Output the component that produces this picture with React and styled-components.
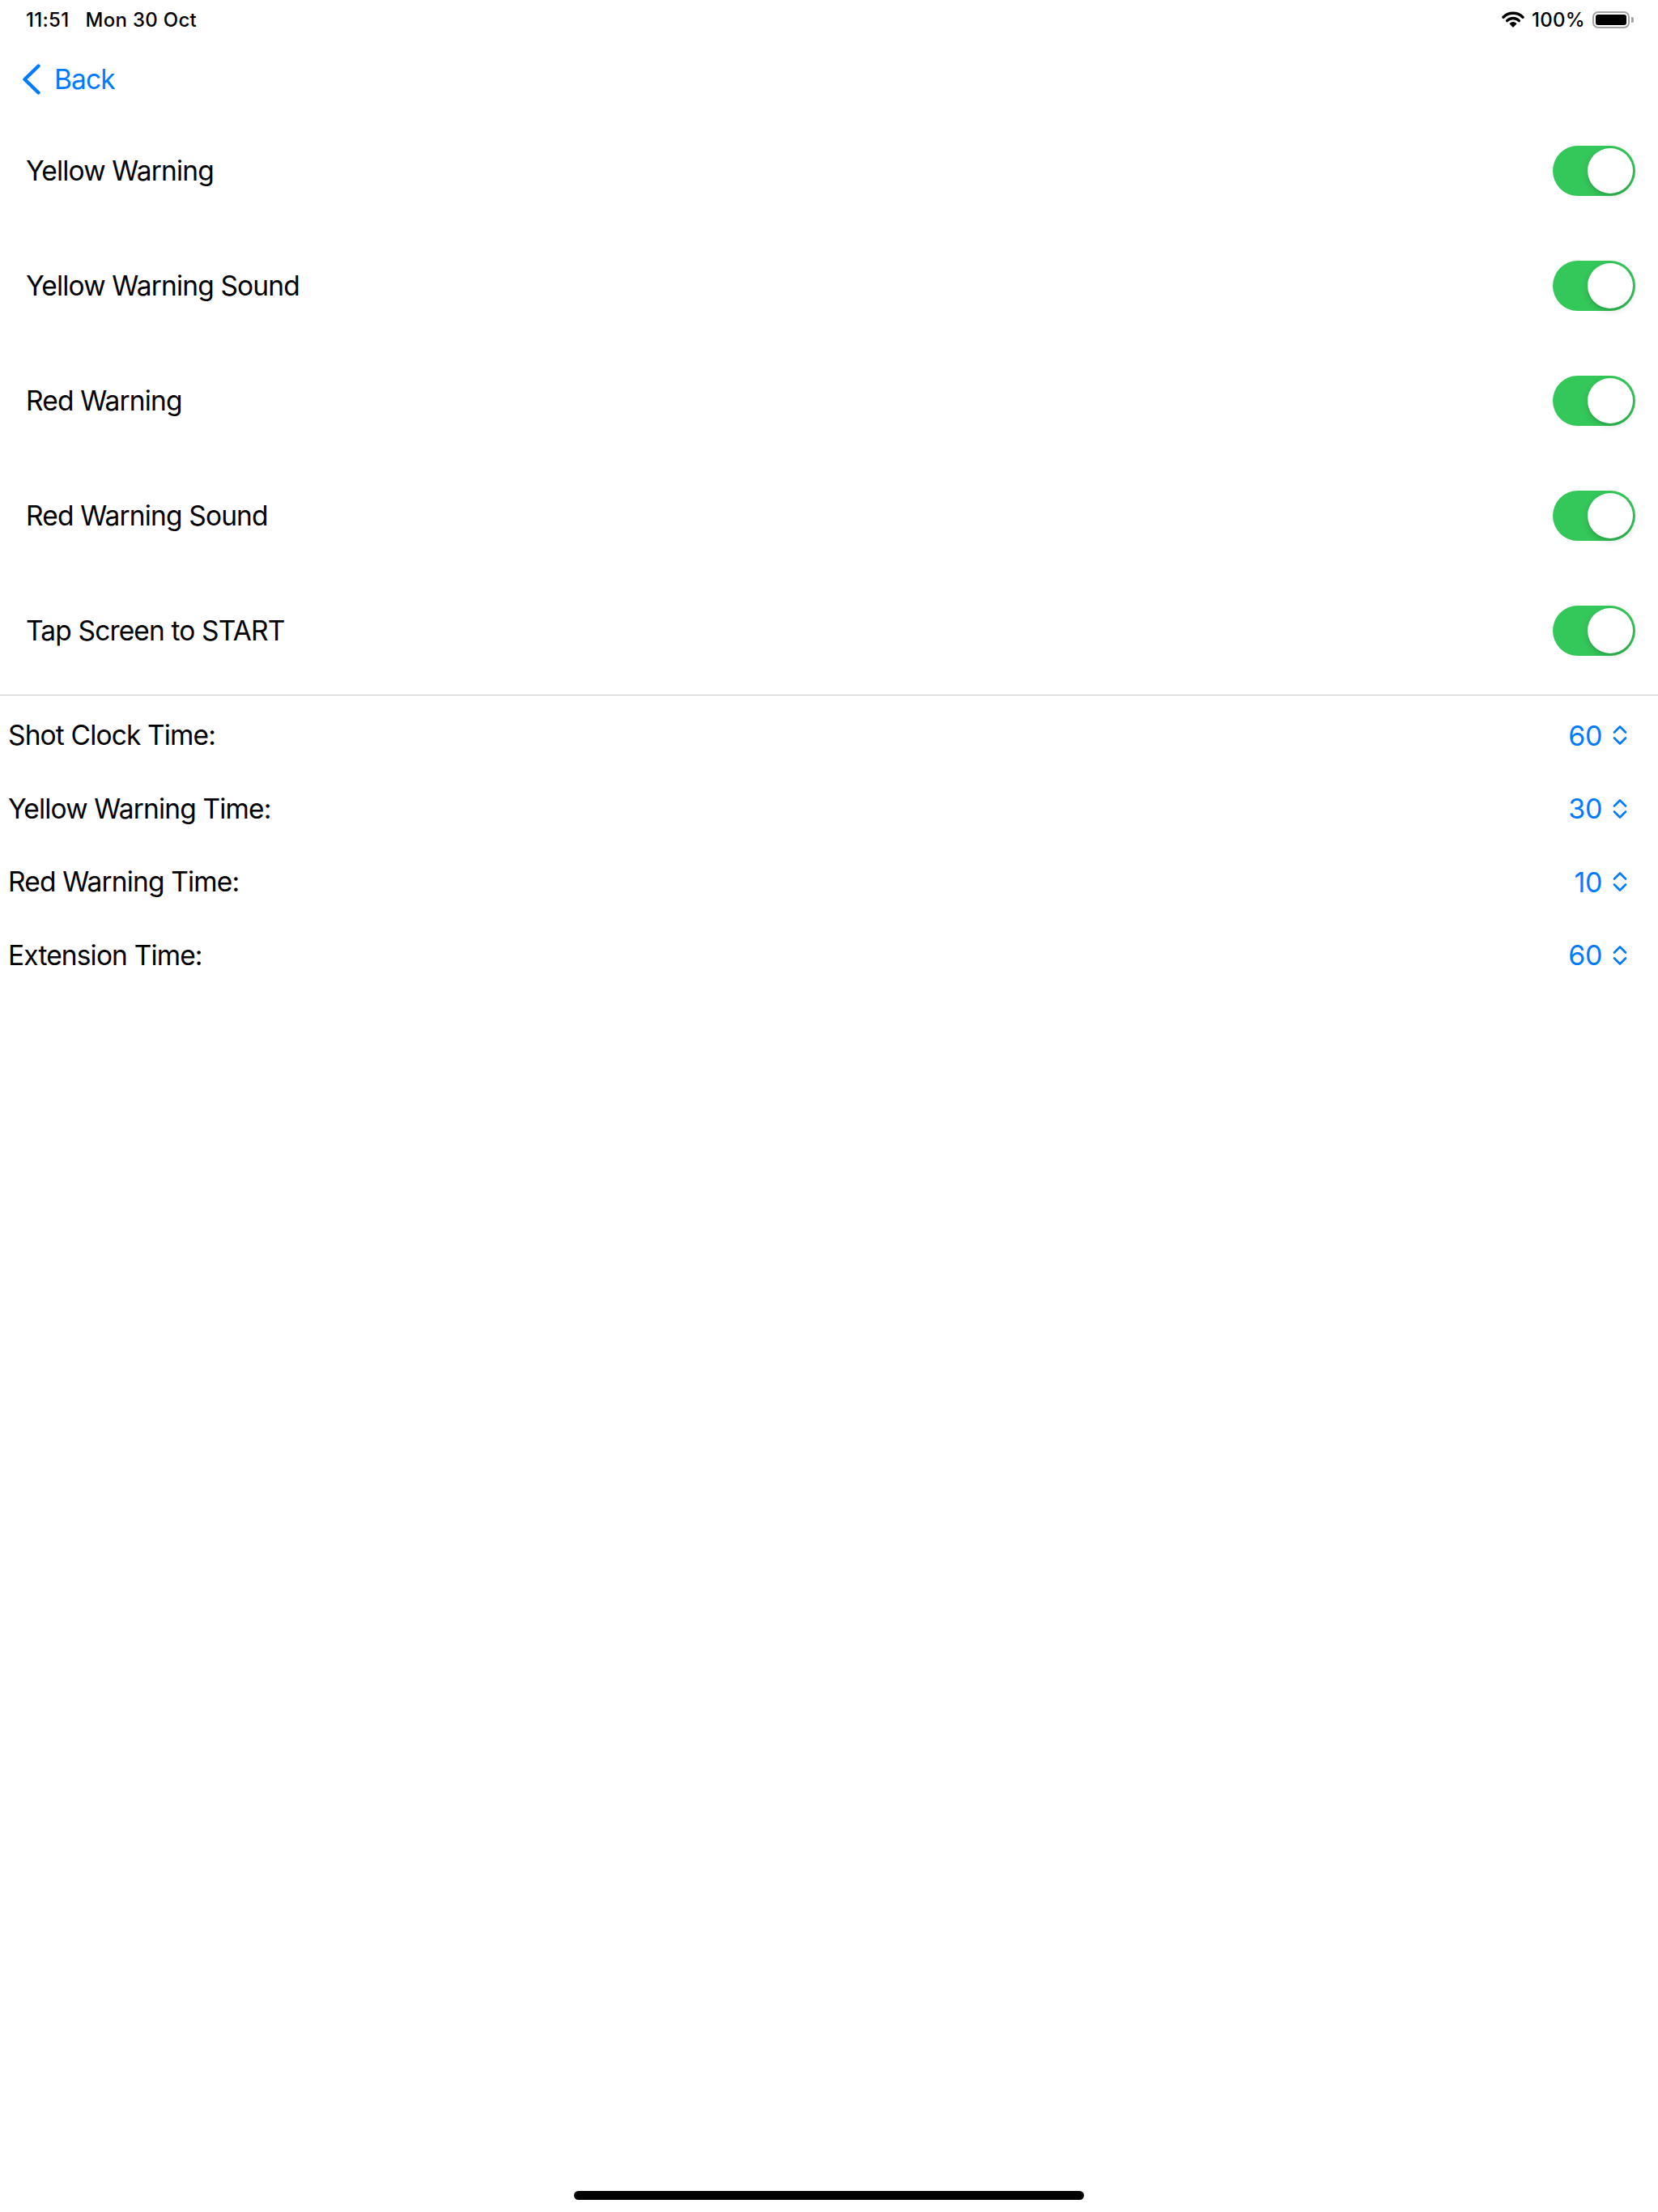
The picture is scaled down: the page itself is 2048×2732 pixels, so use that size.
import React, { useState } from 'react';
import styled, { createGlobalStyle } from 'styled-components';

const GlobalStyle = createGlobalStyle`
  html, body {
    margin: 0;
    padding: 0;
    background: #ffffff;
  }
  body {
    font-family: 'Inter', 'Roboto', sans-serif;
    color: #000;
    -webkit-font-smoothing: antialiased;
  }
`;

const Screen = styled.div`
  width: 2048px;
  min-height: 2732px;
  display: flex;
  flex-direction: column;
  background: #fff;
`;

const StatusBar = styled.div`
  height: 48px;
  padding: 0 30px 0 32px;
  display: flex;
  align-items: center;
  justify-content: space-between;
  font-size: 24px;
  font-weight: 500;
  letter-spacing: 0.3px;
`;

const StatusGroup = styled.div`
  display: flex;
  align-items: center;
  gap: ${(p) => p.gap || 10}px;
`;

const Battery = styled.div`
  display: flex;
  align-items: center;
  gap: 2px;
`;

const BatteryBody = styled.div`
  width: 46px;
  height: 21px;
  box-sizing: border-box;
  border: 2px solid #a3a3a3;
  border-radius: 7px;
  padding: 2px;
`;

const BatteryFill = styled.div`
  width: 100%;
  height: 100%;
  background: #000;
  border-radius: 3px;
`;

const BatteryTip = styled.div`
  width: 3px;
  height: 7px;
  background: #a3a3a3;
  border-radius: 0 2px 2px 0;
`;

const NavBar = styled.div`
  height: 84px;
  padding: 8px 0 0 27px;
  display: flex;
  align-items: center;
`;

const BackButton = styled.button`
  display: flex;
  align-items: center;
  gap: 16px;
  border: none;
  background: none;
  padding: 0;
  color: #007aff;
  font-family: 'Inter', 'Roboto', sans-serif;
  font-size: 33.5px;
  letter-spacing: -0.9px;
  cursor: pointer;
`;

const ToggleList = styled.div`
  display: flex;
  flex-direction: column;
  padding-bottom: 8px;
  border-bottom: 1px solid #c8c8ca;
`;

const ToggleRow = styled.div`
  height: 142px;
  padding: 0 28px 0 32px;
  display: flex;
  align-items: center;
  justify-content: space-between;
`;

const Label = styled.span`
  font-size: 33.5px;
  letter-spacing: -0.85px;
  color: #000;
`;

const Switch = styled.button`
  position: relative;
  width: 102px;
  height: 62px;
  border: none;
  padding: 0;
  border-radius: 31px;
  background: ${(p) => (p.on ? '#34c759' : '#e9e9eb')};
  cursor: pointer;
`;

const Knob = styled.span`
  position: absolute;
  top: 3px;
  left: ${(p) => (p.on ? '43px' : '3px')};
  width: 56px;
  height: 56px;
  border-radius: 50%;
  background: #fff;
  box-shadow: 0 3px 8px rgba(0, 0, 0, 0.15), 0 3px 1px rgba(0, 0, 0, 0.06);
`;

const PickerList = styled.div`
  display: flex;
  flex-direction: column;
  padding-top: 4px;
`;

const PickerRow = styled.div`
  height: 90.5px;
  padding: 0 38px 0 10px;
  display: flex;
  align-items: center;
  justify-content: space-between;
`;

const PickerValue = styled.button`
  display: flex;
  align-items: center;
  gap: 13px;
  border: none;
  background: none;
  padding: 0;
  color: #007aff;
  font-family: 'Inter', 'Roboto', sans-serif;
  font-size: 34px;
  letter-spacing: -0.4px;
  cursor: pointer;
`;

const HomeIndicator = styled.div`
  margin: auto auto 15px;
  width: 630px;
  height: 11px;
  border-radius: 6px;
  background: #000;
`;

const WifiIcon = () => (
  <svg width="28" height="20" viewBox="0 0 28 20">
    <path d="M2 7.2 A17 17 0 0 1 26 7.2" fill="none" stroke="#000" strokeWidth="3.4" strokeLinecap="round" />
    <path d="M6.6 11.6 A10.5 10.5 0 0 1 21.4 11.6" fill="none" stroke="#000" strokeWidth="3.4" strokeLinecap="round" />
    <path d="M14 19 L10.4 15.3 A5 5 0 0 1 17.6 15.3 Z" fill="#000" stroke="#000" strokeWidth="1.5" strokeLinejoin="round" />
  </svg>
);

const BackChevron = () => (
  <svg width="24" height="38" viewBox="0 0 24 38">
    <path d="M20.5 2.5 L3.5 19 L20.5 35.5" fill="none" stroke="#007aff" strokeWidth="4.4" strokeLinecap="round" strokeLinejoin="round" />
  </svg>
);

const UpDownChevron = () => (
  <svg width="18" height="26" viewBox="0 0 18 26">
    <path d="M2 9.5 L9 2.5 L16 9.5" fill="none" stroke="#007aff" strokeWidth="2.6" strokeLinecap="round" strokeLinejoin="round" />
    <path d="M2 16.5 L9 23.5 L16 16.5" fill="none" stroke="#007aff" strokeWidth="2.6" strokeLinecap="round" strokeLinejoin="round" />
  </svg>
);

const toggleItems = [
  'Yellow Warning',
  'Yellow Warning Sound',
  'Red Warning',
  'Red Warning Sound',
  'Tap Screen to START',
];

const pickerItems = [
  { label: 'Shot Clock Time:', value: 60 },
  { label: 'Yellow Warning Time:', value: 30 },
  { label: 'Red Warning Time:', value: 10 },
  { label: 'Extension Time:', value: 60 },
];

const App = () => {
  const [switches, setSwitches] = useState(toggleItems.map(() => true));

  const flip = (i) => {
    setSwitches((s) => s.map((v, j) => (j === i ? !v : v)));
  };

  return (
    <>
      <GlobalStyle />
      <Screen>
        <StatusBar>
          <StatusGroup gap={20}>
            <span>11:51</span>
            <span>Mon 30 Oct</span>
          </StatusGroup>
          <StatusGroup gap={9}>
            <WifiIcon />
            <span>100%</span>
            <Battery>
              <BatteryBody>
                <BatteryFill />
              </BatteryBody>
              <BatteryTip />
            </Battery>
          </StatusGroup>
        </StatusBar>

        <NavBar>
          <BackButton>
            <BackChevron />
            Back
          </BackButton>
        </NavBar>

        <ToggleList>
          {toggleItems.map((label, i) => (
            <ToggleRow key={label}>
              <Label>{label}</Label>
              <Switch on={switches[i] ? 1 : 0} onClick={() => flip(i)}>
                <Knob on={switches[i] ? 1 : 0} />
              </Switch>
            </ToggleRow>
          ))}
        </ToggleList>

        <PickerList>
          {pickerItems.map((item) => (
            <PickerRow key={item.label}>
              <Label>{item.label}</Label>
              <PickerValue>
                {item.value}
                <UpDownChevron />
              </PickerValue>
            </PickerRow>
          ))}
        </PickerList>

        <HomeIndicator />
      </Screen>
    </>
  );
};

export default App;
